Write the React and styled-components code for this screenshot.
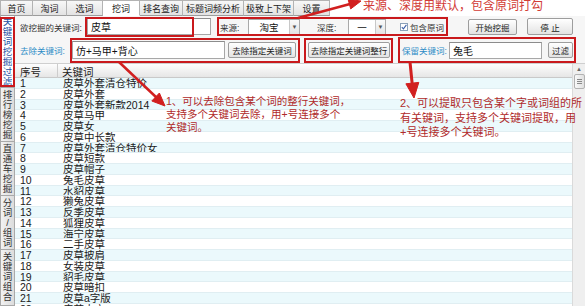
import React from 'react';
import styled, { createGlobalStyle } from 'styled-components';

const FONT = `"Liberation Sans", "Noto Sans CJK SC", sans-serif`;

const Global = createGlobalStyle`
  html, body { margin: 0; padding: 0; background: #fff; }
  body { font-family: ${FONT}; overflow: hidden; }
  * { box-sizing: border-box; }
`;

const Screen = styled.div`
  position: relative;
  width: 585px;
  height: 306px;
  overflow: hidden;
  background: #fff;
  color: #222;
  display: flex;
  flex-direction: column;
`;

const TabBar = styled.div`
  display: flex;
  align-items: flex-start;
  height: 16px;
  flex: none;
`;

const Tab = styled.div`
  width: ${p => p.$w}px;
  height: 16px;
  flex: none;
  display: flex;
  align-items: center;
  justify-content: center;
  font-size: 9px;
  color: #222;
  border: 1px solid #b3b3b3;
  border-left: ${p => (p.$first ? '1px solid #b3b3b3' : 'none')};
  border-bottom-color: ${p => (p.$active ? '#fff' : '#9c9c9c')};
  background: ${p => (p.$active ? '#fff' : 'linear-gradient(#f8f8f8, #e3e3e3)')};
`;

const TopNote = styled.div`
  margin-left: 33px;
  margin-top: -1px;
  font-size: 12px;
  line-height: 14px;
  color: #d23b36;
  white-space: nowrap;
`;

const Body = styled.div`
  flex: 1;
  display: flex;
  min-height: 0;
`;

const SideTabs = styled.div`
  width: 15px;
  flex: none;
  display: flex;
  flex-direction: column;
  background: #ddd;
`;

const SideTab = styled.div`
  height: ${p => (p.$h ? `${p.$h}px` : 'auto')};
  flex: ${p => (p.$h ? 'none' : '1')};
  display: flex;
  flex-direction: column;
  align-items: center;
  padding-top: ${p => p.$pt}px;
  border: 1px solid #a9a9a9;
  border-top: none;
  background: ${p => (p.$active ? '#fff' : 'linear-gradient(90deg, #f2f2f2, #dcdcdc)')};
  color: ${p => (p.$active ? '#2451a3' : '#333')};
  overflow: hidden;
`;

const SideChar = styled.span`
  display: block;
  font-size: 9.5px;
  line-height: 10px;
  height: 10px;
  text-align: center;
`;

const Main = styled.div`
  flex: 1;
  display: flex;
  flex-direction: column;
  background: #f6f6f6;
  min-width: 0;
`;

const FormRow = styled.div`
  display: flex;
  align-items: center;
  height: ${p => p.$h}px;
  flex: none;
`;

const Label = styled.span`
  flex: none;
  width: ${p => p.$w}px;
  margin-left: ${p => p.$ml || 0}px;
  font-size: 8.5px;
  white-space: nowrap;
  color: ${p => (p.$teal ? '#2c8cc6' : '#333')};
`;

const Input = styled.div`
  flex: none;
  width: ${p => p.$w}px;
  height: ${p => p.$h || 17}px;
  margin-left: ${p => p.$ml || 0}px;
  background: #fff;
  border: 1px solid #a7a7a7;
  border-top-color: #8c8c8c;
  font-size: 10px;
  display: flex;
  align-items: center;
  padding-left: 3px;
  color: #111;
  white-space: nowrap;
`;

const Select = styled.div`
  flex: none;
  width: ${p => p.$w}px;
  height: 16px;
  margin-left: ${p => p.$ml || 0}px;
  background: #fff;
  border: 1px solid #a9a9a9;
  display: flex;
  align-items: stretch;
  font-size: 9.5px;
`;

const SelectValue = styled.span`
  flex: 1;
  display: flex;
  align-items: center;
  justify-content: center;
  color: #111;
`;

const SelectArrow = styled.span`
  width: 10px;
  flex: none;
  border-left: 1px solid #c8c8c8;
  background: linear-gradient(#fafafa, #e4e4e4);
  display: flex;
  align-items: center;
  justify-content: center;
  font-size: 6px;
  color: #555;
`;

const Check = styled.span`
  flex: none;
  width: 8px;
  height: 8px;
  margin-left: ${p => p.$ml || 0}px;
  border: 1px solid #8aa0b8;
  background: #fff;
  display: flex;
  align-items: center;
  justify-content: center;
`;

const Button = styled.div`
  flex: none;
  width: ${p => p.$w}px;
  height: ${p => p.$h || 16}px;
  margin-left: ${p => p.$ml || 0}px;
  border: 1px solid #9d9d9d;
  border-radius: 2px;
  background: linear-gradient(#ffffff, #e3e3e3);
  display: flex;
  align-items: center;
  justify-content: center;
  font-size: 8.5px;
  color: #222;
  white-space: nowrap;
`;

const TableArea = styled.div`
  flex: 1;
  display: flex;
  min-height: 0;
  border-top: 1px solid #cfcfcf;
`;

const List = styled.div`
  flex: 1;
  display: flex;
  flex-direction: column;
  background: #fff;
  overflow: hidden;
`;

const HeaderRow = styled.div`
  display: grid;
  grid-template-columns: 43px 1fr;
  height: 14px;
  flex: none;
  background: linear-gradient(#fdfdfd, #e6e6e6);
  border-bottom: 1px solid #c9c9c9;
  font-size: 10.5px;
  color: #222;
`;

const HeadCell = styled.div`
  display: flex;
  align-items: center;
  padding-left: ${p => p.$pl}px;
  border-right: ${p => (p.$divider ? '1px solid #cdcdcd' : 'none')};
`;

const Row = styled.div`
  display: grid;
  grid-template-columns: 43px 1fr;
  height: 10.75px;
  flex: none;
  background: ${p => (p.$odd ? '#ebf9fc' : '#ffffff')};
  border-bottom: 1px solid #e0eef2;
  font-size: 10.5px;
  line-height: 10px;
  color: #1a1a1a;
`;

const Cell = styled.div`
  padding-left: ${p => p.$pl}px;
  white-space: nowrap;
  overflow: hidden;
`;

const ScrollBar = styled.div`
  width: 13px;
  flex: none;
  background: #efefef;
  border-left: 1px solid #dadada;
  display: flex;
  flex-direction: column;
  align-items: center;
`;

const ScrollBtn = styled.div`
  width: 12px;
  height: 10px;
  display: flex;
  align-items: center;
  justify-content: center;
  font-size: 6px;
  color: #666;
`;

const Thumb = styled.div`
  width: 11px;
  height: 15px;
  border: 1px solid #b2b2b2;
  border-radius: 2px;
  background: linear-gradient(90deg, #f9f9f9, #e0e0e0);
  display: flex;
  flex-direction: column;
  align-items: center;
  justify-content: center;
  gap: 1px;
`;

const Grip = styled.span`
  width: 5px;
  height: 1px;
  background: #8a8a8a;
`;

const RedBox = styled.div`
  position: absolute;
  left: ${p => p.$x}px;
  top: ${p => p.$y}px;
  width: ${p => p.$w}px;
  height: ${p => p.$h}px;
  border: 2px solid #c9191c;
  pointer-events: none;
`;

const Note = styled.div`
  position: absolute;
  left: ${p => p.$x}px;
  top: ${p => p.$y}px;
  font-size: ${p => p.$fs}px;
  line-height: ${p => p.$lh}px;
  color: #b02a2a;
  white-space: nowrap;
  pointer-events: none;
`;

const Overlay = styled.svg`
  position: absolute;
  left: 0;
  top: 0;
  pointer-events: none;
`;

const tabs = [
  ['首页', 33],
  ['淘词', 34],
  ['选词', 36],
  ['挖词', 37, true],
  ['排名查询', 43],
  ['标题词频分析', 61],
  ['极致上下架', 50],
  ['设置', 36],
];

const sideTabs = [
  { text: '关键词挖掘过滤', h: 72, active: true, pt: 1 },
  { text: '排行榜挖掘', h: 54, pt: 2 },
  { text: '直通车挖掘', h: 54, pt: 2 },
  { text: '分词/组词', h: 54, pt: 2 },
  { text: '关键词组合', pt: 2 },
];

const words = [
  '皮草外套清仓特价',
  '皮草外套',
  '皮草外套新款2014',
  '皮草马甲',
  '皮草女',
  '皮草中长款',
  '皮草外套清仓特价女',
  '皮草短款',
  '皮草帽子',
  '兔毛皮草',
  '水貂皮草',
  '獭兔皮草',
  '反季皮草',
  '狐狸皮草',
  '海宁皮草',
  '二手皮草',
  '皮草披肩',
  '女装皮草',
  '貂毛皮草',
  '皮草暗扣',
  '皮草a字版',
  '皮草大衣',
];

export default function App() {
  return (
    <>
      <Global />
      <Screen>
        <TabBar>
          {tabs.map(([t, w, a], i) => (
            <Tab key={t} $w={w} $active={a} $first={i === 0}>
              {t}
            </Tab>
          ))}
          <TopNote>来源、深度用默认，包含原词打勾</TopNote>
        </TabBar>
        <Body>
          <SideTabs>
            {sideTabs.map(s => (
              <SideTab key={s.text} $h={s.h} $active={s.active} $pt={s.pt}>
                {Array.from(s.text).map((c, i) => (
                  <SideChar key={i}>{c}</SideChar>
                ))}
              </SideTab>
            ))}
          </SideTabs>
          <Main>
            <FormRow $h={21}>
              <Label $w={67} $ml={5}>欲挖掘的关键词:</Label>
              <Input $w={124}>皮草</Input>
              <Label $w={28} $ml={9}>来源:</Label>
              <Select $w={52}>
                <SelectValue>淘宝</SelectValue>
                <SelectArrow>▼</SelectArrow>
              </Select>
              <Label $w={30} $ml={17}>深度:</Label>
              <Select $w={38} $ml={1}>
                <SelectValue>一</SelectValue>
                <SelectArrow>▼</SelectArrow>
              </Select>
              <Check $ml={14}>
                <svg width="6" height="6" viewBox="0 0 6 6">
                  <path d="M0.8 3.2 L2.4 4.8 L5.4 0.8" fill="none" stroke="#3a5fa8" strokeWidth="1.1" />
                </svg>
              </Check>
              <Label $w={38} $ml={2}>包含原词</Label>
              <Button $w={49} $ml={20} $h={16}>开始挖掘</Button>
              <Button $w={46} $ml={10} $h={17}>停 止</Button>
            </FormRow>
            <FormRow $h={26}>
              <Label $w={52} $ml={5} $teal>去除关键词:</Label>
              <Input $w={153} $h={18}>仿+马甲+背心</Input>
              <Button $w={68} $ml={3}>去除指定关键词</Button>
              <Button $w={82} $ml={12}>去除指定关键词整行</Button>
              <Label $w={46} $ml={12} $teal>保留关键词:</Label>
              <Input $w={93} $ml={1}>兔毛</Input>
              <Button $w={25} $ml={6}>过滤</Button>
            </FormRow>
            <TableArea>
              <List>
                <HeaderRow>
                  <HeadCell $pl={5} $divider>序号</HeadCell>
                  <HeadCell $pl={4}>关键词</HeadCell>
                </HeaderRow>
                {words.map((w, i) => (
                  <Row key={i} $odd={i % 2 === 0}>
                    <Cell $pl={5}>{i + 1}</Cell>
                    <Cell $pl={5}>{w}</Cell>
                  </Row>
                ))}
              </List>
              <ScrollBar>
                <ScrollBtn>▲</ScrollBtn>
                <Thumb>
                  <Grip />
                  <Grip />
                  <Grip />
                </Thumb>
              </ScrollBar>
            </TableArea>
          </Main>
        </Body>

        <RedBox $x={0} $y={17} $w={15} $h={70} />
        <RedBox $x={85} $y={17} $w={109} $h={20} />
        <RedBox $x={217} $y={17} $w={231} $h={19} />
        <RedBox $x={70} $y={38} $w={230} $h={25} />
        <RedBox $x={304} $y={38} $w={89} $h={25} />
        <RedBox $x={398} $y={37} $w={178} $h={26} />

        <Note $x={166} $y={95} $fs={10.5} $lh={13}>
          1、可以去除包含某个词的整行关键词，
          <br />
          支持多个关键词去除，用+号连接多个
          <br />
          关键词。
        </Note>
        <Note $x={400} $y={96} $fs={11} $lh={14.5}>
          2、可以提取只包含某个字或词组的所
          <br />
          有关键词，支持多个关键词提取，用
          <br />
          +号连接多个关键词。
        </Note>

        <Overlay width="585" height="306" viewBox="0 0 585 306">
          <g fill="#d11f1f" stroke="#d11f1f">
            <line x1="119" y1="62" x2="157" y2="98" strokeWidth="2.5" />
            <polygon points="165,106 151.8,101 159.4,93" strokeWidth="1" />
            <line x1="410" y1="62" x2="412.3" y2="85" strokeWidth="3" />
            <polygon points="414,98 405.9,83.8 418.8,82.4" strokeWidth="1" />
            <line x1="298" y1="18" x2="350" y2="4" strokeWidth="2.5" />
            <polygon points="361,1 350.7,8.9 348.1,-0.7" strokeWidth="1" />
          </g>
        </Overlay>
      </Screen>
    </>
  );
}
